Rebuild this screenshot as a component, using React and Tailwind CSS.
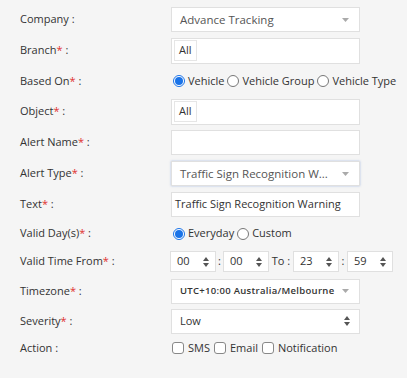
import React from 'react';

const Req = () => <span className="text-[#e0312f]">*</span>;

const Caret = () => (
  <svg width="7" height="4" viewBox="0 0 7 4" className="text-[#aaa] shrink-0">
    <path d="M0 0 L7 0 L3.5 4 Z" fill="currentColor" />
  </svg>
);

const UpDown = () => (
  <svg width="6" height="10" viewBox="0 0 6 10" className="text-[#555] shrink-0">
    <path d="M3 0 L6 4 L0 4 Z M3 10 L0 6 L6 6 Z" fill="currentColor" />
  </svg>
);

const Radio = ({ checked }) =>
  checked ? (
    <span className="w-[12px] h-[12px] shrink-0 rounded-full border border-[#1a73e8] bg-white flex items-center justify-center">
      <span className="w-[8px] h-[8px] rounded-full bg-[#1a73e8]" />
    </span>
  ) : (
    <span className="w-[12px] h-[12px] shrink-0 rounded-full border border-[#777] bg-white" />
  );

const Check = () => <span className="w-[12px] h-[12px] shrink-0 rounded-[3px] border border-[#888] bg-white" />;

const Row = ({ h, label, children }) => (
  <div className={`flex items-center ${h}`}>
    <div className="w-[171px] shrink-0 pl-[20px] text-[11px] text-[#333]">{label}</div>
    <div className="flex items-center shrink-0">{children}</div>
  </div>
);

const box = 'w-[189px] h-[25px] shrink-0 bg-white border border-[#e0e0e0] flex items-center whitespace-nowrap';

const TimeBox = ({ v }) => (
  <div className="w-[46px] h-[21px] bg-white border border-[#e0e0e0] flex items-center justify-between px-[6px] text-[11px] text-[#333]">
    <span>{v}</span>
    <UpDown />
  </div>
);

export default function App() {
  return (
    <div className="w-[407px] h-[378px] bg-[#f5f5f5] pt-[4px]" style={{ fontFamily: '"Open Sans", sans-serif' }}>
      <Row h="h-[31px]" label="Company :">
        <div className={`${box} justify-between pl-[8px] pr-[10px] text-[11.5px] text-[#555]`}>
          <span>Advance Tracking</span>
          <Caret />
        </div>
      </Row>
      <Row h="h-[31px]" label={<>Branch<Req /> :</>}>
        <div className={`${box} h-[26px] px-[2px]`}>
          <span className="border border-[#e6e6e6] px-[4px] h-[21px] flex items-center text-[11px] text-[#333]">All</span>
        </div>
      </Row>
      <Row h="h-[30px]" label={<>Based On<Req /> :</>}>
        <div className="flex items-center gap-[3px] pl-[2px] text-[11px] text-[#333] whitespace-nowrap">
          <Radio checked /> <span>Vehicle</span>
          <Radio /> <span>Vehicle Group</span>
          <Radio /> <span>Vehicle Type</span>
        </div>
      </Row>
      <Row h="h-[31px]" label={<>Object<Req /> :</>}>
        <div className={`${box} h-[26px] px-[2px]`}>
          <span className="border border-[#e6e6e6] px-[4px] h-[21px] flex items-center text-[11px] text-[#333]">All</span>
        </div>
      </Row>
      <Row h="h-[31px]" label={<>Alert Name<Req /> :</>}>
        <div className={box} />
      </Row>
      <Row h="h-[31px]" label={<>Alert Type<Req /> :</>}>
        <div className={`${box} border-[#9db4dc] shadow-[0_0_2px_rgba(100,140,210,0.5)] justify-between pl-[8px] pr-[10px] text-[11.5px] text-[#555]`}>
          <span>Traffic Sign Recognition W...</span>
          <Caret />
        </div>
      </Row>
      <Row h="h-[31px]" label={<>Text<Req /> :</>}>
        <div className={`${box} pl-[3px] text-[11px] text-[#333]`}>Traffic Sign Recognition Warning</div>
      </Row>
      <Row h="h-[27px]" label={<>Valid Day(s)<Req /> :</>}>
        <div className="flex items-center gap-[3px] pl-[2px] text-[11px] text-[#333]">
          <Radio checked /> <span>Everyday</span>
          <Radio /> <span>Custom</span>
        </div>
      </Row>
      <Row h="h-[29px]" label={<>Valid Time From<Req /> :</>}>
        <div className="flex items-center text-[11px] text-[#333] -ml-[1px]">
          <TimeBox v="00" />
          <span className="w-[7px] text-center">:</span>
          <TimeBox v="00" />
          <span className="w-[24px] text-center">To :</span>
          <TimeBox v="23" />
          <span className="w-[8px] text-center">:</span>
          <TimeBox v="59" />
        </div>
      </Row>
      <Row h="h-[30px]" label={<>Timezone<Req /> :</>}>
        <div className={`${box} justify-between pl-[8px] pr-[10px] text-[9.5px] font-semibold tracking-[0.3px] text-[#333]`}>
          <span>UTC+10:00 Australia/Melbourne</span>
          <Caret />
        </div>
      </Row>
      <Row h="h-[30px]" label={<>Severity<Req /> :</>}>
        <div className={`${box} justify-between pl-[8px] pr-[9px] text-[11px] text-[#333]`}>
          <span>Low</span>
          <UpDown />
        </div>
      </Row>
      <Row h="h-[24px]" label="Action :">
        <div className="flex items-center gap-[4px] pl-[1px] text-[11px] text-[#333]">
          <Check /> <span>SMS</span>
          <Check /> <span>Email</span>
          <Check /> <span>Notification</span>
        </div>
      </Row>
    </div>
  );
}
